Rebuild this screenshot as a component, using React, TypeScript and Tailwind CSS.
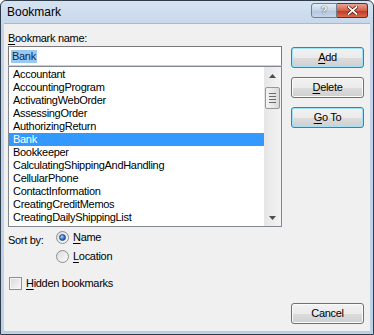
import { ReactNode } from 'react';

const bookmarks = [
  'Accountant',
  'AccountingProgram',
  'ActivatingWebOrder',
  'AssessingOrder',
  'AuthorizingReturn',
  'Bank',
  'Bookkeeper',
  'CalculatingShippingAndHandling',
  'CellularPhone',
  'ContactInformation',
  'CreatingCreditMemos',
  'CreatingDailyShippingList',
];

function Key({ children }: { children: ReactNode }) {
  return <span className="underline underline-offset-[2px]">{children}</span>;
}

function DialogButton({
  children,
  focused = false,
}: {
  children: ReactNode;
  focused?: boolean;
}) {
  return (
    <button
      className={`h-[21px] w-[73px] rounded-[3px] border text-[11px] tracking-[-0.3px] text-black ${
        focused
          ? 'border-[#3c7fb1] shadow-[inset_0_0_0_1px_#9fe2f9]'
          : 'border-[#707070] shadow-[inset_0_0_0_1px_#fbfbfb]'
      } bg-[linear-gradient(#f2f2f2_0%,#ebebeb_50%,#dddddd_51%,#cfcfcf_100%)]`}
    >
      {children}
    </button>
  );
}

function Radio({ checked }: { checked?: boolean }) {
  return (
    <span className="flex h-[13px] w-[13px] items-center justify-center rounded-full border border-[#8e8f8f] bg-[linear-gradient(135deg,#dcdcdc,#fbfbfb)]">
      {checked && (
        <span className="h-[7px] w-[7px] rounded-full border border-[#1b4a8f] bg-[radial-gradient(circle_at_35%_35%,#a9dcfb,#2b69c6_60%,#184a9a)]" />
      )}
    </span>
  );
}

export default function App() {
  return (
    <div
      className="flex h-[335px] w-[374px] flex-col overflow-hidden rounded-t-[6px] border border-[#2e3c4c] bg-[linear-gradient(#d6e3f1,#c2d4e8_30px,#bcd2e8)]"
      style={{ fontFamily: '"Liberation Sans", Arial, sans-serif' }}
    >
      {/* title bar */}
      <div className="flex h-[22px] shrink-0 items-start justify-between pl-[6px] pr-[5px]">
        <span className="pt-[4px] text-[12px] leading-[14px] text-black">Bookmark</span>
        <div className="flex pt-[2px]">
          <div className="flex h-[15px] w-[26px] items-center justify-center rounded-l-[3px] border border-[#6d7f94] bg-[linear-gradient(#e4edf6,#c2d3e6_50%,#b1c5dc_51%,#c5d7ea)]">
            <span className="text-[11px] font-bold leading-none text-white [text-shadow:0_0_1px_#2d4a6b,0_0_1px_#2d4a6b]">?</span>
          </div>
          <div className="flex h-[15px] w-[31px] items-center justify-center rounded-r-[3px] border border-l-0 border-[#6b2a20] bg-[linear-gradient(#e8a493,#d4604a_50%,#c0361e_51%,#d86a4c)]">
            <svg width="11" height="9" viewBox="0 0 11 9">
              <path d="M1.5 1 L9.5 8 M9.5 1 L1.5 8" stroke="#4a1208" strokeWidth="3.2" strokeLinecap="square" />
              <path d="M1.5 1 L9.5 8 M9.5 1 L1.5 8" stroke="#ffffff" strokeWidth="1.8" strokeLinecap="square" />
            </svg>
          </div>
        </div>
      </div>

      {/* client area */}
      <div className="mx-[3px] mb-[3px] flex flex-1 border-t border-[#a7b9cc] bg-[#f0f0f0] text-[11px] leading-[13px] tracking-[-0.3px] text-black shadow-[0_1px_0_#9fd4ee]">
        <div className="ml-[4px] flex w-[274px] flex-col pt-[8px]">
          <div>
            <Key>B</Key>ookmark name:
          </div>
          <div className="mt-[1px] flex h-[20px] items-center border border-[#7a7a7a] border-b-[#cfcfcf] bg-white px-[2px]">
            <span className="bg-[#99c9f2] px-px text-[#0f2a52]">Bank</span>
          </div>
          <div className="flex h-[161px] border border-[#828790] bg-white">
            <ul className="flex-1 pt-[1px]">
              {bookmarks.map((b) => (
                <li
                  key={b}
                  className={`h-[13px] pl-[4px] ${b === 'Bank' ? 'bg-[#3399ff] text-white' : ''}`}
                >
                  {b}
                </li>
              ))}
            </ul>
            <div className="flex w-[17px] flex-col bg-[linear-gradient(90deg,#e6e6e6,#f3f3f3)]">
              <div className="flex h-[17px] items-center justify-center">
                <svg width="7" height="4" viewBox="0 0 7 4">
                  <path d="M0 4 L3.5 0 L7 4 Z" fill="#4d4d4d" />
                </svg>
              </div>
              <div className="mx-px mt-[3px] flex h-[22px] flex-col items-center justify-center gap-[2px] rounded-[2px] border border-[#979797] bg-[linear-gradient(90deg,#f3f3f3,#e8e8e8_50%,#d9d9d9)]">
                <span className="h-px w-[7px] bg-[#6a6a6a]" />
                <span className="h-px w-[7px] bg-[#6a6a6a]" />
                <span className="h-px w-[7px] bg-[#6a6a6a]" />
                <span className="h-px w-[7px] bg-[#6a6a6a]" />
              </div>
              <div className="flex-1" />
              <div className="flex h-[17px] items-center justify-center">
                <svg width="7" height="4" viewBox="0 0 7 4">
                  <path d="M0 0 L7 0 L3.5 4 Z" fill="#4d4d4d" />
                </svg>
              </div>
            </div>
          </div>

          <div className="mt-[4px] flex">
            <span className="w-[48px] pt-[3px]">Sort by:</span>
            <div className="flex flex-col gap-[6px]">
              <label className="flex items-center gap-[4px]">
                <Radio checked />
                <span>
                  <Key>N</Key>ame
                </span>
              </label>
              <label className="flex items-center gap-[4px]">
                <Radio />
                <span>
                  <Key>L</Key>ocation
                </span>
              </label>
            </div>
          </div>

          <label className="ml-px mt-[14px] flex items-center gap-[4px]">
            <span className="h-[13px] w-[13px] border border-[#8f8f8f] bg-[linear-gradient(135deg,#d8d8d8,#f9f9f9)] shadow-[inset_0_0_0_1px_#f4f4f4]" />
            <span>
              <Key>H</Key>idden bookmarks
            </span>
          </label>
        </div>

        <div className="ml-[9px] flex flex-col gap-[9px] pb-[7px] pt-[23px]">
          <DialogButton focused>
            <Key>A</Key>dd
          </DialogButton>
          <DialogButton>
            <Key>D</Key>elete
          </DialogButton>
          <DialogButton focused>
            <Key>G</Key>o To
          </DialogButton>
          <div className="mt-auto">
            <DialogButton>Cancel</DialogButton>
          </div>
        </div>
      </div>
    </div>
  );
}
